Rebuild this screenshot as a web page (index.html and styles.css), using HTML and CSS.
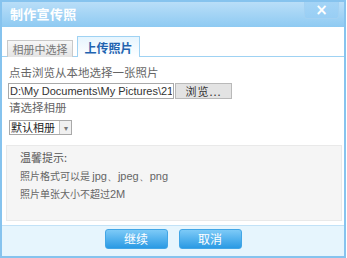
FILE: index.html
```html
<!DOCTYPE html>
<html>
<head>
  <meta charset="UTF-8">
  <title>制作宣传照</title>
  <link rel="stylesheet" href="styles.css">
</head>
<body>
  <div class="dialog">
    <div class="title-bar">
      <span class="title">制作宣传照</span>
      <button class="close">×</button>
    </div>

    <div class="tabs">
      <div class="tab">相册中选择</div>
      <div class="tab active">上传照片</div>
    </div>

    <div class="panel">
      <div class="label">点击浏览从本地选择一张照片</div>
      <div class="file-row">
        <input type="text" class="file-path" value="D:\My Documents\My Pictures\2106.jpg">
        <button class="browse">浏览...</button>
      </div>
      <div class="label">请选择相册</div>
      <div class="select">
        <span class="select-text">默认相册</span>
        <span class="select-arrow">▾</span>
      </div>
      <div class="tips">
        <div class="tip-title">温馨提示:</div>
        <div>照片格式可以是 <span class="latin">jpg、jpeg、png</span></div>
        <div>照片单张大小不超过<span class="latin">2M</span></div>
      </div>
    </div>

    <div class="footer">
      <button class="btn">继续</button>
      <button class="btn">取消</button>
    </div>
  </div>
</body>
</html>
```

FILE: styles.css
```css
body {
  margin: 0;
  font-family: "Noto Sans CJK SC", "Liberation Sans", sans-serif;
  font-size: 12px;
  color: #555;
  background: #fff;
}
.dialog {
  width: 346px;
  height: 258px;
  box-sizing: border-box;
  border: 2px solid #86c3ee;
  display: flex;
  flex-direction: column;
}
.title-bar {
  height: 25px;
  flex: 0 0 25px;
  display: flex;
  justify-content: space-between;
  align-items: flex-start;
  background: linear-gradient(#b9def8, #8ecaf2);
}
.title {
  color: #fff;
  font-weight: bold;
  font-size: 13px;
  line-height: 24px;
  margin-left: 8px;
  letter-spacing: 0.3px;
}
.close {
  width: 35px;
  height: 17px;
  margin: 0 5px 0 0;
  padding: 0;
  border: 1px solid #a3d1f2;
  border-top: none;
  border-radius: 0 0 3px 3px;
  background: linear-gradient(#a4d4f6, #98cef4);
  color: #fff;
  font-family: "DejaVu Sans", sans-serif;
  font-size: 15px;
  font-weight: bold;
  line-height: 14px;
}
.tabs {
  flex: 0 0 30px;
  box-sizing: border-box;
  display: flex;
  align-items: flex-end;
  gap: 4px;
  padding-left: 5px;
  border-bottom: 1px solid #9fd2f3;
}
.tab {
  width: 66px;
  height: 17px;
  box-sizing: border-box;
  margin-bottom: -1px;
  border: 1px solid #c9c9c9;
  border-bottom: none;
  background: linear-gradient(#f7f7f7, #e4e4e4);
  color: #777;
  font-size: 11px;
  line-height: 16px;
  text-align: center;
}
.tab.active {
  width: 63px;
  height: 21px;
  border-color: #9fd2f3;
  background: linear-gradient(#e6f5fe, #fff);
  color: #1f63b0;
  font-weight: bold;
  font-size: 12px;
  line-height: 21px;
}
.panel {
  flex: 1;
  padding: 7px 2px 4px 4px;
  display: flex;
  flex-direction: column;
}
.label {
  margin-left: 3px;
  line-height: 16px;
  font-size: 11.5px;
  color: #666;
}
.file-row {
  display: flex;
  margin: 3px 0 0 2px;
  height: 16px;
}
.file-path {
  width: 166px;
  height: 16px;
  box-sizing: border-box;
  border: 1px solid #a9a9a9;
  padding: 0 1px;
  margin: 0;
  font-family: "Liberation Sans", sans-serif;
  font-size: 11px;
  color: #333;
}
.browse {
  width: 57px;
  height: 16px;
  margin: 0 0 0 1px;
  padding: 0;
  border: 1px solid #b9b9b9;
  background: #e3e3e3;
  font-family: "Noto Sans CJK SC", sans-serif;
  font-size: 11px;
  line-height: 13px;
  color: #333;
  letter-spacing: 1px;
}
.select {
  display: flex;
  align-items: center;
  width: 63px;
  height: 15px;
  box-sizing: border-box;
  margin: 5px 0 0 3px;
  border: 1px solid #a9a9a9;
}
.select-text {
  flex: 1;
  padding-left: 1px;
  font-size: 11px;
  line-height: 13px;
  color: #222;
  white-space: nowrap;
}
.select-arrow {
  width: 11px;
  height: 13px;
  border-left: 1px solid #c4c4c4;
  background: #f0f0f0;
  color: #777;
  font-size: 8px;
  line-height: 13px;
  text-align: center;
}
.tips {
  flex: 1;
  margin: 10px 0 0 0;
  padding: 3px 13px;
  background: #f5f5f5;
  border: 1px solid #e9e9e9;
  font-size: 10px;
  line-height: 17.5px;
  color: #666;
}
.tip-title {
  font-size: 11px;
  color: #555;
}
.latin {
  font-family: "Liberation Sans", sans-serif;
  font-size: 11px;
}
.footer {
  flex: 0 0 27px;
  display: flex;
  justify-content: center;
  align-items: flex-start;
  gap: 11px;
  padding-top: 3px;
  border-top: 1px solid #c2e2f7;
  background: #e6f5fd;
}
.btn {
  width: 63px;
  height: 20px;
  padding: 0;
  border: 1px solid #42a6e6;
  border-radius: 3px;
  background: linear-gradient(#7dcaf7, #2a9ae4);
  color: #fff;
  font-family: "Noto Sans CJK SC", sans-serif;
  font-size: 12px;
  line-height: 18px;
}
```
